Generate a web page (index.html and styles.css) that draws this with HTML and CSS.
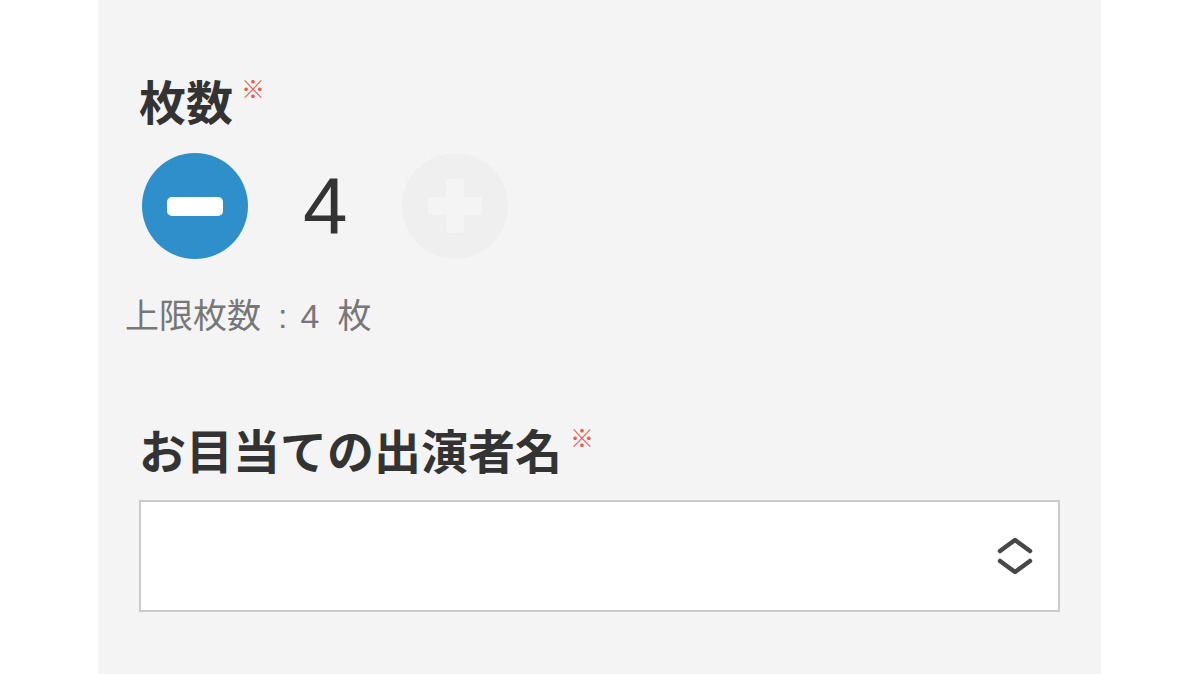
FILE: index.html
```html
<!DOCTYPE html>
<html lang="ja">
<head>
<meta charset="utf-8">
<link rel="stylesheet" href="styles.css">
</head>
<body>
<div class="panel">
  <div class="field-label">枚数<span class="req">※</span></div>
  <div class="stepper">
    <button class="step minus" type="button" aria-label="減らす"><span class="bar"></span></button>
    <div class="count">4</div>
    <button class="step plus" type="button" aria-label="増やす">
      <svg width="58" height="58" viewBox="0 0 58 58"><path d="M22 4h14v18h18v14H36v18H22V36H4V22h18z" fill="#f4f4f4" stroke="#f4f4f4" stroke-width="4" stroke-linejoin="round"/></svg>
    </button>
  </div>
  <div class="limit">上限枚数<span class="colon">:</span><span class="num">4</span>枚</div>
  <div class="field-label second">お目当ての出演者名<span class="req">※</span></div>
  <div class="select">
    <svg class="chev" width="36" height="40" viewBox="0 0 36 40"><path d="M3 15L18 4L33 15M3 25L18 36L33 25" fill="none" stroke="#474747" stroke-width="4.5" stroke-linecap="round" stroke-linejoin="round"/></svg>
  </div>
</div>
</body>
</html>
```

FILE: styles.css
```css
html, body {
  margin: 0;
  padding: 0;
  background: #ffffff;
}
body {
  font-family: "Noto Sans CJK JP", "Noto Sans", sans-serif;
  color: #333333;
}
.panel {
  margin-left: 98px;
  width: 1003px;
  height: 674px;
  box-sizing: border-box;
  background: #f4f4f4;
  padding: 76px 0 0 41px;
  overflow: hidden;
}
.field-label {
  display: flex;
  align-items: flex-start;
  font-size: 47px;
  font-weight: 700;
  line-height: 1;
  color: #333333;
}
.req {
  font-size: 24px;
  font-weight: 400;
  color: #ee5a4c;
  margin-left: 8px;
  line-height: 1;
}
.stepper {
  display: flex;
  align-items: center;
  margin-top: 30px;
  margin-left: 3px;
}
.step {
  width: 106px;
  height: 106px;
  border-radius: 50%;
  border: none;
  padding: 0;
  display: flex;
  align-items: center;
  justify-content: center;
}
.minus {
  background: #2e8fcb;
}
.bar {
  width: 56px;
  height: 19px;
  border-radius: 5px;
  background: #ffffff;
}
.plus {
  background: #efefef;
}
.count {
  font-family: "Liberation Sans", Arial, sans-serif;
  font-size: 80px;
  line-height: 1;
  color: #333333;
  margin: 0 54px 0 55px;
  width: 45px;
}
.limit {
  margin-top: 38px;
  margin-left: -14px;
  font-size: 34px;
  line-height: 1;
  color: #777777;
}
.colon {
  font-family: "Liberation Sans", Arial, sans-serif;
  margin: 0 13px 0 17px;
}
.num {
  font-family: "Liberation Sans", Arial, sans-serif;
  margin-right: 18px;
}
.second {
  margin-top: 92px;
}
.select {
  margin-top: 28px;
  width: 921px;
  height: 112px;
  box-sizing: border-box;
  border: 2px solid #cbcbcb;
  background: #ffffff;
  display: flex;
  align-items: center;
  justify-content: flex-end;
  padding-right: 25px;
}
.chev {
  display: block;
}
```
